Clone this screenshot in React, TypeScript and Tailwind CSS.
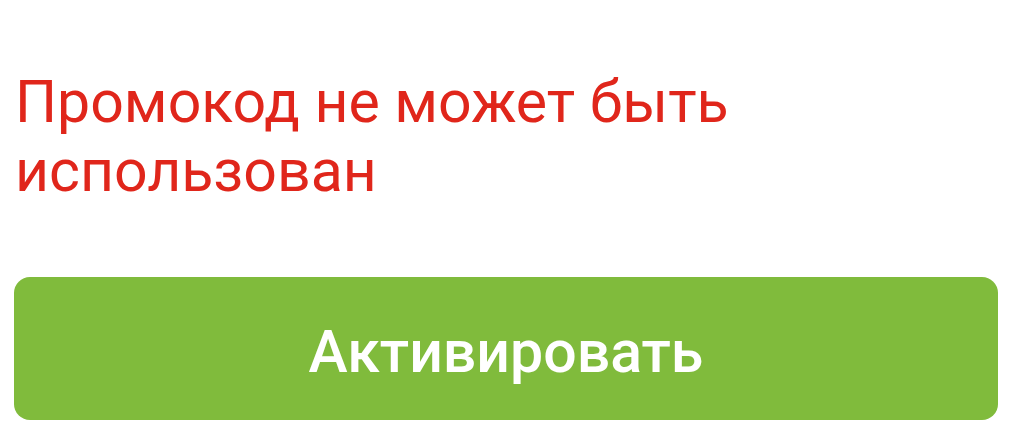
export default function App() {
  return (
    <div className="w-[1019px] h-[423px] bg-white px-[14px] pt-[67px] font-['Roboto',sans-serif] overflow-hidden">
      <p className="pl-[1px] text-[59px] leading-[69px] text-[#e0261b]">
        Промокод не может быть использован
      </p>
      <button className="mt-[72px] w-[984px] h-[143px] rounded-[16px] bg-[#80bb3c] text-white text-[59px] font-medium flex items-center justify-center pt-[8px]">
        Активировать
      </button>
    </div>
  )
}
